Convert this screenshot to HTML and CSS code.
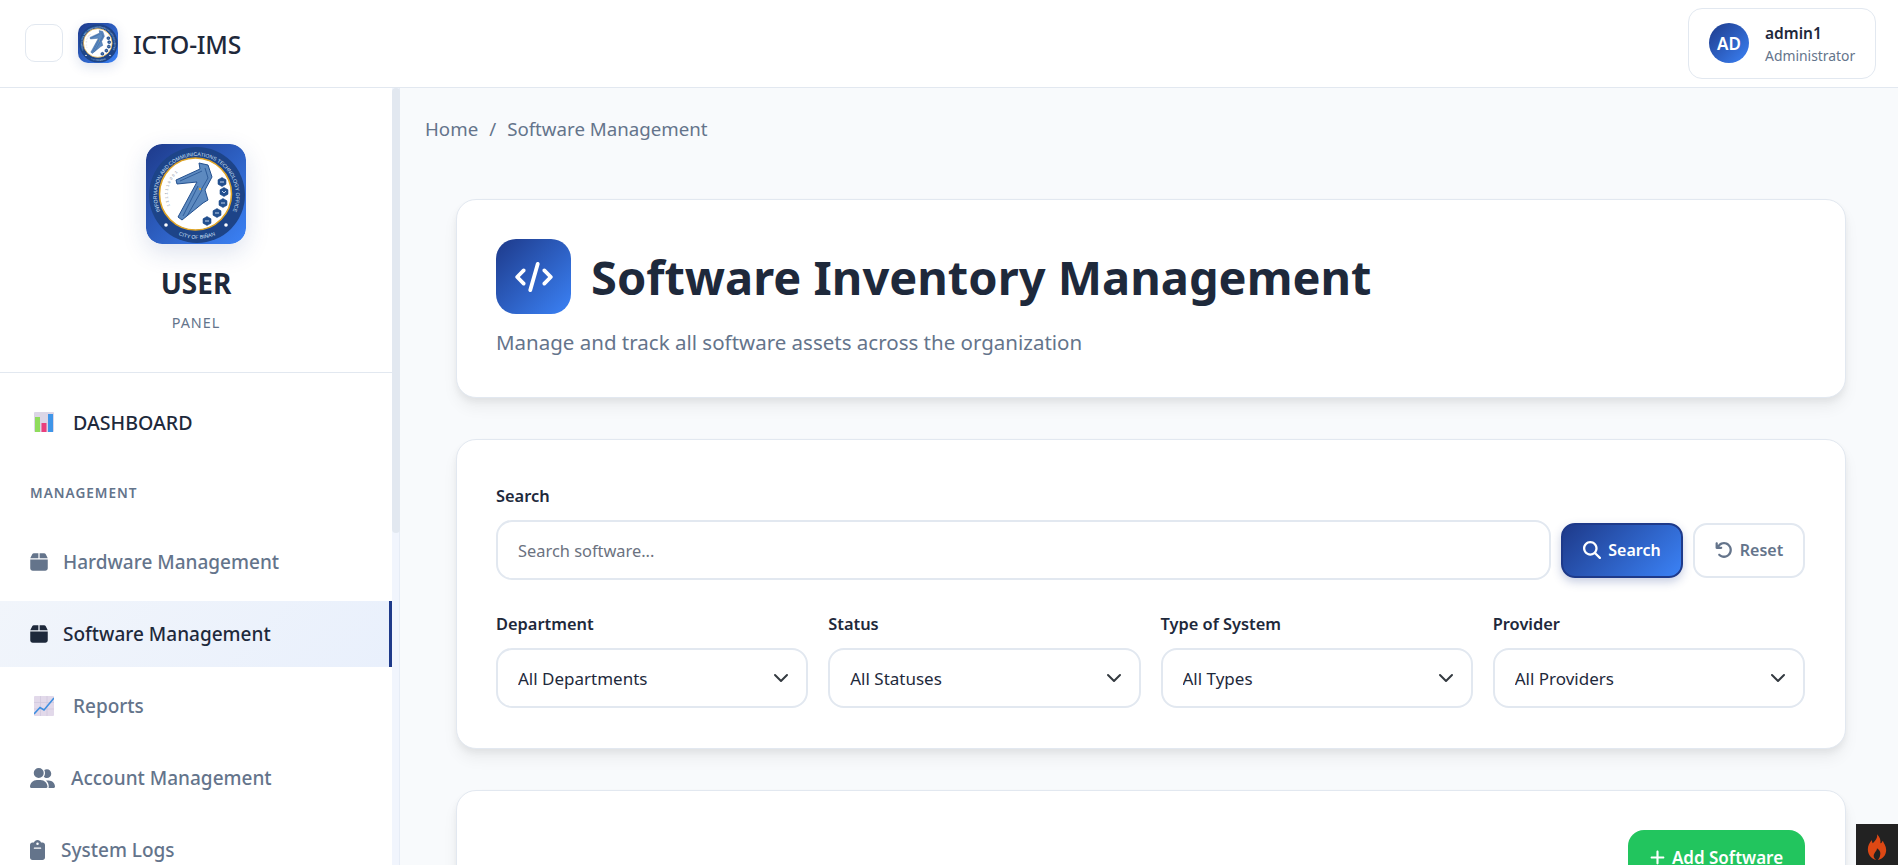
FILE: index.html
```html
<!DOCTYPE html>
<html lang="en">
<head>
    <meta charset="UTF-8">
    <meta name="viewport" content="width=device-width, initial-scale=1.0">
    <title>Software Inventory Management</title>
    <link rel="stylesheet" href="styles.css">
</head>
<body>

<svg class="defs" width="0" height="0" aria-hidden="true">
    <defs>
        <linearGradient id="brand" x1="0" y1="0" x2="1" y2="1">
            <stop offset="0" stop-color="#1e3a8a"/>
            <stop offset="1" stop-color="#3b82f6"/>
        </linearGradient>
        <path id="arcTop" d="M18 74 A39.5 39.5 0 1 1 83 74"/>
        <path id="arcBottom" d="M27 88 A45 45 0 0 0 75 88"/>
        <path id="arcDigits" d="M24 62 A29 29 0 0 1 46 22"/>
        <symbol id="seal" viewBox="0 0 100 100">
            <rect width="100" height="100" rx="16" fill="url(#brand)"/>
            <circle cx="51" cy="51" r="48" fill="#1d4488"/>
            <text class="seal-text"><textPath href="#arcTop" startOffset="50%" text-anchor="middle">INFORMATION AND COMMUNICATIONS TECHNOLOGY OFFICE</textPath></text>
            <text class="seal-text"><textPath href="#arcBottom" startOffset="50%" text-anchor="middle">CITY OF BIÑAN</textPath></text>
            <circle cx="20" cy="81" r="1.8" fill="#fff"/>
            <circle cx="80" cy="81" r="1.8" fill="#fff"/>
            <circle cx="49.5" cy="50" r="36" fill="#fff" stroke="#e0a526" stroke-width="1.6"/>
            <text class="seal-digits"><textPath href="#arcDigits">1111110001</textPath></text>
            <path d="M30 36 54 25 53 19 62 21 66 33 59 46 62 56 57 59 36 76 32 73 51 38 31 40Z" fill="#5d8ac0" stroke="#23508f" stroke-width="1"/>
            <path d="M34 37 56 27M59 24 62 34 55 46M52 42 37 72M56 46 41 72" fill="none" stroke="#23508f" stroke-width=".8"/>
            <circle cx="54" cy="45" r="1.2" fill="#e0a526"/>
            <g fill="#23508f" stroke="#23508f" stroke-width=".6" stroke-linejoin="round">
                <polygon points="76,33.500 80,35.800 80,40.200 76,42.500 72,40.200 72,35.800"/>
                <polygon points="78,43.500 82,45.800 82,50.200 78,52.500 74,50.200 74,45.800"/>
                <polygon points="77,54.500 81,56.800 81,61.200 77,63.500 73,61.200 73,56.800"/>
                <polygon points="71,64.500 75,66.800 75,71.200 71,73.500 67,71.200 67,66.800"/>
                <polygon points="61,72.500 65,74.800 65,79.200 61,81.500 57,79.200 57,74.800"/>
            </g>
            <path d="M74 38H78M76 47 78 49 80 47M75 59H79M69 69H73M59 77H63" stroke="#cfe0f6" stroke-width=".9" fill="none"/>
        </symbol>
        <symbol id="i-box" viewBox="0 0 448 512"><path d="M50.7 58.5L0 160H208V32H93.7C75.5 32 58.9 42.3 50.7 58.5zM240 160H448L397.3 58.5C389.1 42.3 372.5 32 354.3 32H240V160zM448 192H0V416c0 35.3 28.7 64 64 64H384c35.3 0 64-28.7 64-64V192z"/></symbol>
    </defs>
</svg>

<header class="topbar">
    <div class="topbar-left">
        <button class="menu-btn" type="button" aria-label="Menu"></button>
        <svg class="topbar-logo"><use href="#seal"/></svg>
        <span class="brand-name">ICTO-IMS</span>
    </div>
    <div class="user-box">
        <div class="avatar">AD</div>
        <div class="user-text">
            <div class="user-name">admin1</div>
            <div class="user-role">Administrator</div>
        </div>
    </div>
</header>

<div class="layout">
    <aside class="sidebar">
        <div class="sidebar-inner">
            <div class="sidebar-head">
                <svg class="sidebar-logo"><use href="#seal"/></svg>
                <div class="sidebar-title">USER</div>
                <div class="sidebar-sub">PANEL</div>
            </div>
            <nav class="nav">
                <a class="nav-item nav-dash" href="#">
                    <svg class="nav-emoji" viewBox="0 0 20 20">
                        <rect width="20" height="20" rx="1" fill="#dcd6e6"/>
                        <rect x="1" y="5" width="5" height="15" fill="#8fdc5c"/>
                        <rect x="7.5" y="11" width="5" height="9" fill="#ea3f7d"/>
                        <rect x="14" y="2" width="5" height="18" fill="#3f95e8"/>
                    </svg>
                    <span>DASHBOARD</span>
                </a>
                <div class="nav-label">MANAGEMENT</div>
                <a class="nav-item" href="#">
                    <svg class="nav-icon icon-box"><use href="#i-box"/></svg>
                    <span>Hardware Management</span>
                </a>
                <a class="nav-item active" href="#">
                    <svg class="nav-icon icon-box"><use href="#i-box"/></svg>
                    <span>Software Management</span>
                </a>
                <a class="nav-item" href="#">
                    <svg class="nav-emoji" viewBox="0 0 20 20">
                        <rect width="20" height="20" rx="1" fill="#e2d9ea"/>
                        <path d="M0 6.500H20M0 13H20M6.500 0V20M13 0V20" stroke="#cfc5dc" stroke-width=".7"/>
                        <path d="M0 18 6 11.500 10 14 20 2" fill="none" stroke="#3f8fe0" stroke-width="1.6"/>
                    </svg>
                    <span>Reports</span>
                </a>
                <a class="nav-item" href="#">
                    <svg class="nav-icon icon-users" viewBox="0 0 640 512"><path d="M96 128a128 128 0 1 1 256 0A128 128 0 1 1 96 128zM0 482.3C0 383.8 79.8 304 178.3 304h91.4C368.2 304 448 383.8 448 482.3c0 16.4-13.3 29.7-29.7 29.7H29.7C13.3 512 0 498.7 0 482.3zM609.3 512H471.4c5.4-9.4 8.6-20.3 8.6-32v-8c0-60.7-27.1-115.2-69.8-151.8c2.4-.1 4.7-.2 7.1-.2h61.4C567.8 320 640 392.2 640 481.3c0 17-13.8 30.7-30.7 30.7zM432 256c-31 0-59-12.6-79.3-32.9C372.4 196.5 384 163.6 384 128c0-26.8-6.6-52.1-18.3-74.3C384.3 40.1 407.2 32 432 32c61.9 0 112 50.1 112 112s-50.1 112-112 112z"/></svg>
                    <span>Account Management</span>
                </a>
                <a class="nav-item" href="#">
                    <svg class="nav-icon icon-clip" viewBox="0 0 384 512"><path d="M192 0c-41.8 0-77.4 26.7-90.5 64H64C28.7 64 0 92.7 0 128V448c0 35.3 28.7 64 64 64H320c35.3 0 64-28.7 64-64V128c0-35.3-28.7-64-64-64H282.5C269.4 26.7 233.8 0 192 0zm0 64a32 32 0 1 1 0 64 32 32 0 1 1 0-64zM112 192H272c8.8 0 16 7.2 16 16s-7.2 16-16 16H112c-8.8 0-16-7.2-16-16s7.2-16 16-16z"/></svg>
                    <span>System Logs</span>
                </a>
            </nav>
        </div>
        <div class="scroll-track"><div class="scroll-thumb"></div></div>
    </aside>

    <main class="main">
        <div class="breadcrumb">
            <a href="#">Home</a>
            <span class="crumb-sep">/</span>
            <span>Software Management</span>
        </div>

        <div class="content">
            <section class="card page-head">
                <div class="page-title-row">
                    <div class="page-icon">
                        <svg viewBox="0 0 640 512"><path d="M392.8 1.2c-17-4.9-34.7 5-39.6 22l-128 448c-4.9 17 5 34.7 22 39.6s34.7-5 39.6-22l128-448c4.9-17-5-34.7-22-39.6zm80.6 120.1c-12.5 12.5-12.5 32.8 0 45.3L562.7 256l-89.4 89.4c-12.5 12.5-12.5 32.8 0 45.3s32.8 12.5 45.3 0l112-112c12.5-12.5 12.5-32.8 0-45.3l-112-112c-12.5-12.5-32.8-12.5-45.3 0zm-306.7 0c-12.5-12.5-32.8-12.5-45.3 0l-112 112c-12.5 12.5-12.5 32.8 0 45.3l112 112c12.5 12.5 32.8 12.5 45.3 0s12.5-32.8 0-45.3L77.3 256l89.4-89.4c12.5-12.5 12.5-32.8 0-45.3z"/></svg>
                    </div>
                    <h1>Software Inventory Management</h1>
                </div>
                <p class="page-sub">Manage and track all software assets across the organization</p>
            </section>

            <section class="card filters">
                <label class="field-label" for="q">Search</label>
                <div class="search-row">
                    <input class="control search-input" id="q" type="text" placeholder="Search software...">
                    <button class="btn btn-primary" type="button">
                        <svg viewBox="0 0 512 512"><path d="M416 208c0 45.9-14.9 88.3-40 122.7L502.6 457.4c12.5 12.5 12.5 32.8 0 45.3s-32.8 12.5-45.3 0L330.7 376c-34.4 25.2-76.8 40-122.7 40C93.1 416 0 322.9 0 208S93.1 0 208 0S416 93.1 416 208zM208 352a144 144 0 1 0 0-288 144 144 0 1 0 0 288z"/></svg>
                        Search
                    </button>
                    <button class="btn btn-ghost" type="button">
                        <svg viewBox="0 0 512 512"><path d="M125.7 160H176c17.7 0 32 14.3 32 32s-14.3 32-32 32H48c-17.7 0-32-14.3-32-32V64c0-17.7 14.3-32 32-32s32 14.3 32 32v51.2L97.6 97.6c87.5-87.5 229.3-87.5 316.8 0s87.5 229.3 0 316.8s-229.3 87.5-316.8 0c-12.5-12.5-12.5-32.8 0-45.3s32.8-12.5 45.3 0c62.5 62.5 163.8 62.5 226.3 0s62.5-163.8 0-226.3s-163.8-62.5-226.3 0L125.7 160z"/></svg>
                        Reset
                    </button>
                </div>
                <div class="filter-grid">
                    <div>
                        <label class="field-label" for="dept">Department</label>
                        <select class="control" id="dept"><option>All Departments</option></select>
                    </div>
                    <div>
                        <label class="field-label" for="status">Status</label>
                        <select class="control" id="status"><option>All Statuses</option></select>
                    </div>
                    <div>
                        <label class="field-label" for="type">Type of System</label>
                        <select class="control" id="type"><option>All Types</option></select>
                    </div>
                    <div>
                        <label class="field-label" for="provider">Provider</label>
                        <select class="control" id="provider"><option>All Providers</option></select>
                    </div>
                </div>
            </section>

            <section class="card list-card">
                <button class="btn-add" type="button">
                    <svg viewBox="0 0 448 512"><path d="M256 80c0-17.7-14.3-32-32-32s-32 14.3-32 32V224H48c-17.7 0-32 14.3-32 32s14.3 32 32 32H192V432c0 17.7 14.3 32 32 32s32-14.3 32-32V288H400c17.7 0 32-14.3 32-32s-14.3-32-32-32H256V80z"/></svg>
                    Add Software
                </button>
            </section>
        </div>
    </main>
</div>

<!-- debug toolbar tab -->
<div class="debug-tab">
    <svg viewBox="0 0 24 32"><path d="M12 0c1 5-2 7-5 11-1-1-1-3-1-4-3 3-5 7-5 11 0 7 5 12 10 13-3-2-4-5-2-8 1-2 3-3 3-6 3 2 4 4 4 6 0 3-1 6-3 8 6-1 10-6 10-12 0-5-3-8-4-11-1 1-1 3-3 3 1-4-1-8-4-11z"/></svg>
</div>

</body>
</html>
```

FILE: styles.css
```css
* { margin: 0; padding: 0; box-sizing: border-box; }
html, body { height: 100%; }
body { background: #f8fafc; color: #1e293b; font-family: "Noto Sans", "Open Sans", sans-serif; overflow: hidden; display: flex; flex-direction: column; }
a { color: inherit; text-decoration: none; }
.defs { position: absolute; }

/* top bar */
.topbar {
    height: 88px;
    flex-shrink: 0;
    background: #fff;
    border-bottom: 1px solid #e2e8f0;
    display: flex;
    align-items: center;
    justify-content: space-between;
    padding: 0 22px 1px 25px;
}
.topbar-left { display: flex; align-items: center; }
.menu-btn { width: 38px; height: 38px; background: #fff; border: 1px solid #e2e8f0; border-radius: 10px; margin-right: 15px; }
.topbar-logo { width: 40px; height: 40px; border-radius: 10px; box-shadow: 0 4px 12px rgba(30, 58, 138, 0.15); margin-right: 15px; }
.brand-name { font-size: 24.6px; font-weight: 500; letter-spacing: -0.2px; padding-top: 2px; }

.user-box { width: 188px; height: 71px; display: flex; align-items: center; gap: 16px; padding-left: 20px; border: 1px solid #e2e8f0; border-radius: 14px; background: #fff; }
.avatar { width: 40px; height: 40px; border-radius: 50%; background: linear-gradient(135deg, #1e3a8a, #3b82f6); color: #fff; font-size: 17px; font-weight: 600; display: flex; align-items: center; justify-content: center; }
.user-name { font-size: 15.5px; font-weight: 600; line-height: 24px; padding-top: 1px; }
.user-role { font-size: 13.9px; color: #64748b; line-height: 22px; }

.layout { flex: 1; display: flex; min-height: 0; }

/* sidebar */
.sidebar { width: 400px; flex-shrink: 0; display: flex; background: #fff; overflow: hidden; }
.sidebar-inner { width: 392px; flex-shrink: 0; }
.scroll-track { width: 8px; background: #f1f5fd; border-right: 1px solid #e6ecf6; }
.scroll-thumb { height: 445px; width: 8px; background: #e2e8f0; border-radius: 4px; }

.sidebar-head { height: 285px; padding-top: 56px; border-bottom: 1px solid #e2e8f0; display: flex; flex-direction: column; align-items: center; }
.sidebar-logo { width: 100px; height: 100px; border-radius: 16px; box-shadow: 0 8px 24px rgba(30, 58, 138, 0.15); }
.sidebar-title { font-size: 28px; font-weight: 700; line-height: 38px; margin-top: 20px; }
.sidebar-sub { font-size: 14.4px; color: #64748b; letter-spacing: 1px; line-height: 20px; margin-top: 11px; }

.nav { padding-top: 16px; }
.nav-item { display: flex; align-items: center; height: 66px; margin-bottom: 6px; padding-left: 30px; color: #64748b; font-size: 19px; font-weight: 500; }
.nav-item.active { background: linear-gradient(135deg, #f1f5fb, #e9f0fc); color: #1e293b; border-right: 3px solid #1e3a8a; }
.nav-dash { color: #1e293b; font-size: 19.6px; }
.nav-label { font-size: 13.6px; font-weight: 600; color: #64748b; letter-spacing: 1px; line-height: 18px; padding-left: 30px; margin: 29px 0 27px; }
.nav-emoji { width: 20px; height: 20px; margin: 0 19px 0 4px; }
.nav-icon { fill: #64748b; margin-right: 15px; }
.active .nav-icon { fill: #1e293b; }
.icon-box { width: 18px; height: 20px; }
.icon-users { width: 25px; height: 20px; margin-right: 16px; }
.icon-clip { width: 15px; height: 20px; margin-right: 16px; }

/* main */
.main { flex: 1; min-width: 0; }
.breadcrumb { font-size: 18.7px; color: #64748b; padding: 28px 0 0 25px; line-height: 26px; display: flex; gap: 11px; }
.content { padding: 57px 52px 0 56px; display: flex; flex-direction: column; gap: 41px; }
.card { background: #fff; border: 1px solid #e2e8f0; border-radius: 20px; box-shadow: 0 4px 6px rgba(0, 0, 0, 0.05), 0 10px 15px rgba(0, 0, 0, 0.05); padding: 39px 40px 39px 39px; }

.page-head { height: 199px; }
.page-title-row { display: flex; align-items: center; gap: 20px; height: 75px; }
.page-icon { width: 75px; height: 75px; border-radius: 20px; background: linear-gradient(135deg, #1e3a8a, #3b82f6); display: flex; align-items: center; justify-content: center; }
.page-icon svg { width: 38px; height: 30px; fill: #fff; }
h1 { font-size: 47px; font-weight: 700; line-height: 73px; padding-top: 2px; }
.page-sub { font-size: 20.5px; color: #64748b; line-height: 30px; margin-top: 13px; }

.filters { height: 310px; padding-top: 44px; }
.field-label { display: block; font-size: 16.4px; font-weight: 600; line-height: 24px; margin-bottom: 12px; }
.search-row { display: flex; align-items: center; gap: 10px; margin-top: 1px; }
.control { width: 100%; height: 60px; font-family: inherit; font-size: 17px; color: #1e293b; background: #fff; border: 2px solid #e2e8f0; border-radius: 16px; padding: 0 20px; outline: none; }
select.control {
    appearance: none;
    background-image: url("data:image/svg+xml,%3Csvg xmlns='http://www.w3.org/2000/svg' viewBox='0 0 16 16'%3E%3Cpath fill='none' stroke='%23343a40' stroke-linecap='round' stroke-linejoin='round' stroke-width='2' d='m2 5 6 6 6-6'/%3E%3C/svg%3E");
    background-repeat: no-repeat;
    background-position: right 17px center;
    background-size: 16px 16px;
}
.search-input { flex: 1; font-size: 16.4px; }
.search-input::placeholder { color: #6b7280; opacity: 1; }
.btn { height: 55px; display: flex; align-items: center; justify-content: center; gap: 7px; font-family: inherit; font-size: 16px; font-weight: 600; border-radius: 14px; flex-shrink: 0; }
.btn svg { width: 18px; height: 18px; }
.btn-primary { width: 122px; color: #fff; background: linear-gradient(135deg, #1e3a8a, #3b82f6); border: 2px solid #1e3a8a; box-shadow: 0 4px 10px rgba(30, 58, 138, 0.25); }
.btn-primary svg { fill: #fff; }
.btn-ghost { width: 112px; color: #64748b; background: #fff; border: 2px solid #e2e8f0; }
.btn-ghost svg { fill: #64748b; }
.filter-grid { display: grid; grid-template-columns: repeat(4, 1fr); gap: 20px; margin-top: 32px; }

.list-card { height: 220px; display: flex; justify-content: flex-end; }
.btn-add { width: 177px; height: 55px; display: flex; align-items: center; justify-content: center; gap: 7px; font-family: inherit; font-size: 17px; font-weight: 600; color: #fff; background: #22c55e; border: none; border-radius: 16px; }
.btn-add svg { width: 15px; height: 17px; fill: #fff; }

.debug-tab { position: fixed; right: 0; bottom: 0; width: 42px; height: 41px; background: #222; display: flex; justify-content: center; padding-top: 10px; }
.debug-tab svg { width: 20px; height: 27px; fill: #dd4814; }

/* seal artwork */
.seal-text { font-family: "Liberation Sans", sans-serif; font-size: 5.2px; fill: #cfe0f6; }
.seal-digits { font-family: "Liberation Mono", monospace; font-size: 4px; fill: #8a94a3; letter-spacing: 1.4px; }
```
